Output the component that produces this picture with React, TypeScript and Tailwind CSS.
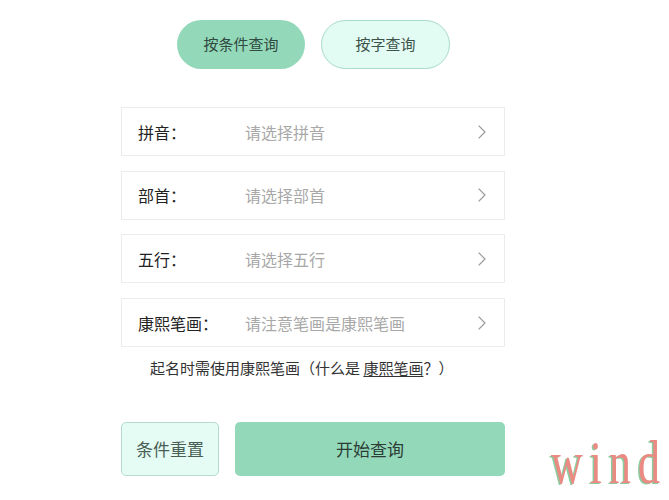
import { ChevronRight } from "lucide-react";

const FONT = { fontFamily: '"Noto Sans CJK SC", "Noto Sans", sans-serif' };

const rows = [
  { label: "拼音：", hint: "请选择拼音" },
  { label: "部首：", hint: "请选择部首" },
  { label: "五行：", hint: "请选择五行" },
  { label: "康熙笔画：", hint: "请注意笔画是康熙笔画" },
];

function PickerRow({ label, hint }: { label: string; hint: string }) {
  return (
    <div className="flex h-[49px] items-center border border-[#ececec] bg-white pl-[16px] pr-[10px]">
      <span className="w-[107px] text-[16px] text-[#222]">{label}</span>
      <span className="flex-1 text-[16px] text-[#a8a8a8]">{hint}</span>
      <ChevronRight size={24} strokeWidth={1.1} className="text-[#9a9a9a]" />
    </div>
  );
}

export default function App() {
  return (
    <div className="relative h-[500px] w-[669px] overflow-hidden bg-white" style={FONT}>
      <div className="ml-[121px] w-[384px] pt-[20px]">
        <div className="flex justify-center gap-[16px] pl-[1px]">
          <button
            type="button"
            className="h-[49px] w-[128px] rounded-full bg-[#94d8ba] text-[15px] text-[#2f4a3f]"
          >
            按条件查询
          </button>
          <button
            type="button"
            className="h-[49px] w-[129px] rounded-full border border-[#a9dcc6] bg-[#e2fbf3] text-[15px] text-[#3d524a]"
          >
            按字查询
          </button>
        </div>

        <div className="mt-[38px] flex flex-col gap-[14.7px]">
          {rows.map((r) => (
            <PickerRow key={r.label} label={r.label} hint={r.hint} />
          ))}
        </div>

        <p className="mt-[10px] pl-[29px] text-[15px] text-[#333]">
          起名时需使用康熙笔画（什么是 <span className="underline underline-offset-2">康熙笔画</span>？）
        </p>

        <div className="mt-[42px] flex gap-[16px]">
          <button
            type="button"
            className="h-[54px] w-[98px] rounded-[5px] border border-[#b3dccb] bg-[#e4fcf4] text-[17px] text-[#4a5e56]"
          >
            条件重置
          </button>
          <button
            type="button"
            className="h-[54px] flex-1 rounded-[5px] bg-[#94d8ba] text-[17px] text-[#2b3d35]"
          >
            开始查询
          </button>
        </div>
      </div>

      {/* watermark */}
      <span
        className="absolute bottom-[6px] right-[2px] origin-bottom scale-y-[1.4] text-[44px] leading-none tracking-[7px] text-[#ea8a82]"
        style={{ fontFamily: '"Liberation Serif", serif', textShadow: "-1.5px 1px 0 #8ccba0" }}
      >
        wind
      </span>
    </div>
  );
}
